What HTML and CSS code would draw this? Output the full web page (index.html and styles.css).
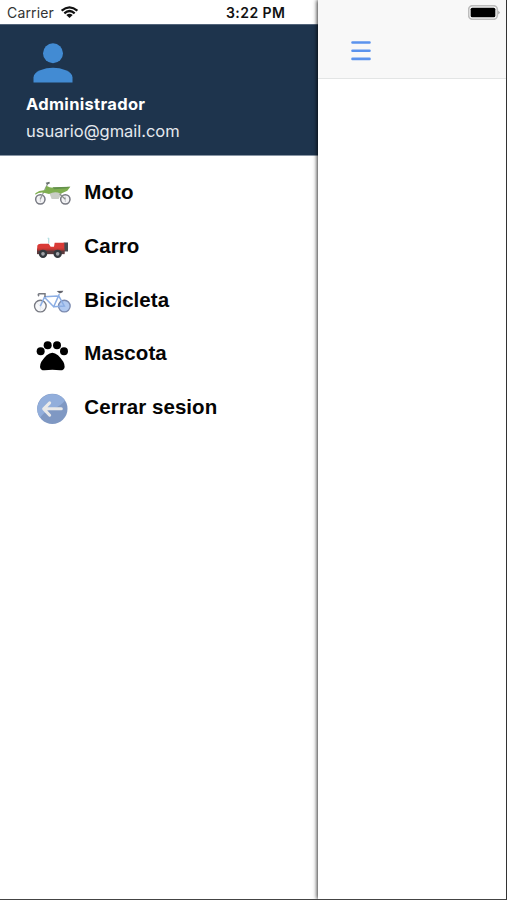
FILE: index.html
```html
<!DOCTYPE html>
<html lang="es">
<head>
<meta charset="utf-8">
<title>Menu</title>
<link rel="stylesheet" href="styles.css">
</head>
<body>
<div class="app">
  <aside class="drawer">
    <div class="status">
      <span class="carrier">Carrier</span>
      <svg class="wifi" viewBox="0 0 51 36">
        <g fill="none" stroke="#111" stroke-width="6.5"><path d="M2 14Q25.500-6 49 14"/><path d="M10 22Q25.500 8 41 22"/></g>
        <path d="M16 27Q25.500 19 35 27L25.500 36Z" fill="#111"/>
      </svg>
      <span class="time">3:22 PM</span>
    </div>
    <header class="profile">
      <svg class="avatar" viewBox="0 0 40 40"><circle cx="20" cy="10.200" r="10" fill="#428bd3"/><path d="M.5 39.500V34.500C.5 28 12 24.700 20 24.700S39.500 28 39.500 34.500V39.500Z" fill="#428bd3"/></svg>
      <div class="name">Administrador</div>
      <div class="email">usuario@gmail.com</div>
    </header>
    <nav class="menu">
      <a class="item">
        <svg class="icon" viewBox="0 -15 180 161">
          <g fill="#f3f3f5" stroke="#777982" stroke-width="4.500"><circle cx="46" cy="88" r="14"/><circle cx="121" cy="88" r="14"/></g>
          <path d="M46 80V96M121 80V96" stroke="#b0b1b8" stroke-width="2"/>
          <path d="M72 66H112L101 87H80Z" fill="#c9cdc5"/>
          <path d="M104 72L121 88" stroke="#8b918a" stroke-width="4"/>
          <path d="M68 41L60 58L46 88" fill="none" stroke="#959b98" stroke-width="3.500"/>
          <path d="M31 70Q43 60 60 61L64 47Q76 54 85 53L136 50L127 62L107 71Q90 62 72 72L60 69Q45 64 31 74Z" fill="#7fae50"/>
          <path d="M82 52L136 50L127 55L88 58Z" fill="#64914c"/>
          <path d="M62 38L73 35L75 40L66 44Z" fill="#69716f"/>
        </svg>
        <span>Moto</span>
      </a>
      <a class="item">
        <svg class="icon" viewBox="0 -17.400 180 161">
          <path d="M68 40L71 41L71 56" fill="none" stroke="#b5dfe2" stroke-width="4"/>
          <path d="M116 53H129V80H116Z" fill="#454b51"/>
          <path d="M36 79L37 62Q39 57 47 57H71L77 66H87L89 54H118V84H36Z" fill="#d93b37"/>
          <path d="M36 76H119V88H36Z" fill="#5b3b3e"/>
          <path d="M36 74H118" stroke="#b93733" stroke-width="5"/>
          <g fill="#a1a4a9" stroke="#34393e" stroke-width="7"><circle cx="54" cy="87" r="9"/><circle cx="98" cy="87" r="9"/></g>
        </svg>
        <span>Carro</span>
      </a>
      <a class="item">
        <svg class="icon" viewBox="0 -16.300 180 161">
          <g stroke="#777982" stroke-width="4"><circle cx="46" cy="83" r="17.500" fill="#f7f8fa"/><circle cx="118" cy="83" r="17.500" fill="#b1c9f0" stroke="#7c8bb0"/></g>
          <path d="M46 67V99M35 72L57 94" stroke="#d5dbe5" stroke-width="1.500"/>
          <path d="M46 83L59 55L98 53M59 57L86 85L103 47M86 85L118 83L102 54" fill="none" stroke="#8caee4" stroke-width="4.500"/>
          <path d="M60 56V46H43Q37 48 42 53" fill="none" stroke="#777a82" stroke-width="4.500"/>
          <path d="M95 38L115 37Q114 43 104 45Z" fill="#62646c"/>
        </svg>
        <span>Bicicleta</span>
      </a>
      <a class="item">
        <svg class="icon" viewBox="0 -12 180 161">
          <circle cx="47" cy="64" r="12"/><circle cx="68" cy="45.500" r="12"/><circle cx="96" cy="45.500" r="12"/><circle cx="117" cy="64" r="12"/>
          <path d="M82 68Q90 68 99 76Q108 85 115 95Q119 102 119 111Q117 122 105 121Q82 118 59 121Q47 122 45 111Q45 102 49 95Q56 85 65 76Q74 68 82 68Z"/>
        </svg>
        <span>Mascota</span>
      </a>
      <a class="item">
        <svg class="icon" viewBox="0 -15.500 180 161">
          <circle cx="82" cy="71" r="45.500" fill="#7f98c3"/>
          <path d="M38 81A45.500 45.500 0 0 1 120 46Q108 62 86 70Q62 75 45 97Q40 90 38 81Z" fill="#92aedb"/>
          <path d="M109 71H57M74 53L56 71L74 90" fill="none" stroke="#e9e9e9" stroke-width="9" stroke-linecap="round" stroke-linejoin="round"/>
        </svg>
        <span>Cerrar sesion</span>
      </a>
    </nav>
  </aside>
  <main class="page">
    <header class="toolbar">
      <svg class="battery" viewBox="0 0 96 45"><rect x="2" y="2" width="86" height="41" rx="12" fill="#fafafa" stroke="#bdbdbd" stroke-width="5"/><rect x="8" y="8" width="74" height="29" rx="5"/><path d="M91 17Q99 22.500 91 28Z" fill="#999"/></svg>
      <svg class="burger" viewBox="0 0 20 22"><path d="M1.500 2.500H18.500M1.500 10.700H18.500M1.500 18.900H18.500" stroke="#5b93ed" stroke-width="2.600" stroke-linecap="round"/></svg>
    </header>
  </main>
</div>
</body>
</html>
```
FILE: styles.css
```css
* { box-sizing: border-box; }
body { margin: 0; background: #fff; }
.app {
  display: flex;
  width: 507px;
  height: 900px;
  overflow: hidden;
  border-right: 1px solid #333;
  border-bottom: 1px solid #444;
  font-family: Inter, "Liberation Sans", sans-serif;
}
.drawer { width: 317.600px; flex: none; }
.status {
  height: 24px;
  display: flex;
  align-items: center;
  padding: 1px 0 0 7px;
  font-size: 14px;
  line-height: 24px;
  color: #333;
}
.carrier { width: 54px; white-space: nowrap; letter-spacing: .15px; }
.wifi { width: 17px; height: 12px; margin-top: -1px; }
.time { margin-left: 148px; font-weight: 600; color: #111; white-space: nowrap; letter-spacing: .45px; }
.profile {
  height: 132px;
  padding: 18px 0 0 26px;
  background: #1e344d;
  border-top: 1px solid #52647a;
  border-bottom: 1px solid #8996a5;
  color: #fff;
}
.avatar { display: block; width: 40px; height: 40px; margin-left: 7.400px; }
.name { margin-top: 8px; font-size: 16.500px; line-height: 27px; font-weight: 700; letter-spacing: .32px; }
.email { font-size: 16.500px; line-height: 27px; color: #e5e9ed; letter-spacing: -.03px; }
.menu { padding: 9.200px 0 0 25px; }
.item {
  display: flex;
  align-items: center;
  height: 53.700px;
  font: bold 20.500px/53.700px "Liberation Sans", Arial, sans-serif;
  letter-spacing: .06px;
  color: #050505;
}
.icon { width: 60px; height: 53.700px; flex: none; margin-right: -.700px; }
.page {
  position: relative;
  flex: 1;
  background: #fff;
  box-shadow: -1px 0 4px rgba(0, 0, 0, .8);
}
.toolbar {
  position: relative;
  height: 79px;
  padding: 40px 0 0 33.700px;
  background: #f8f8f8;
  border-bottom: 1px solid #e3e5e5;
}
.battery { position: absolute; top: 4.500px; right: 6px; width: 32px; height: 15px; }
.burger { display: block; width: 20px; height: 22px; }
```
